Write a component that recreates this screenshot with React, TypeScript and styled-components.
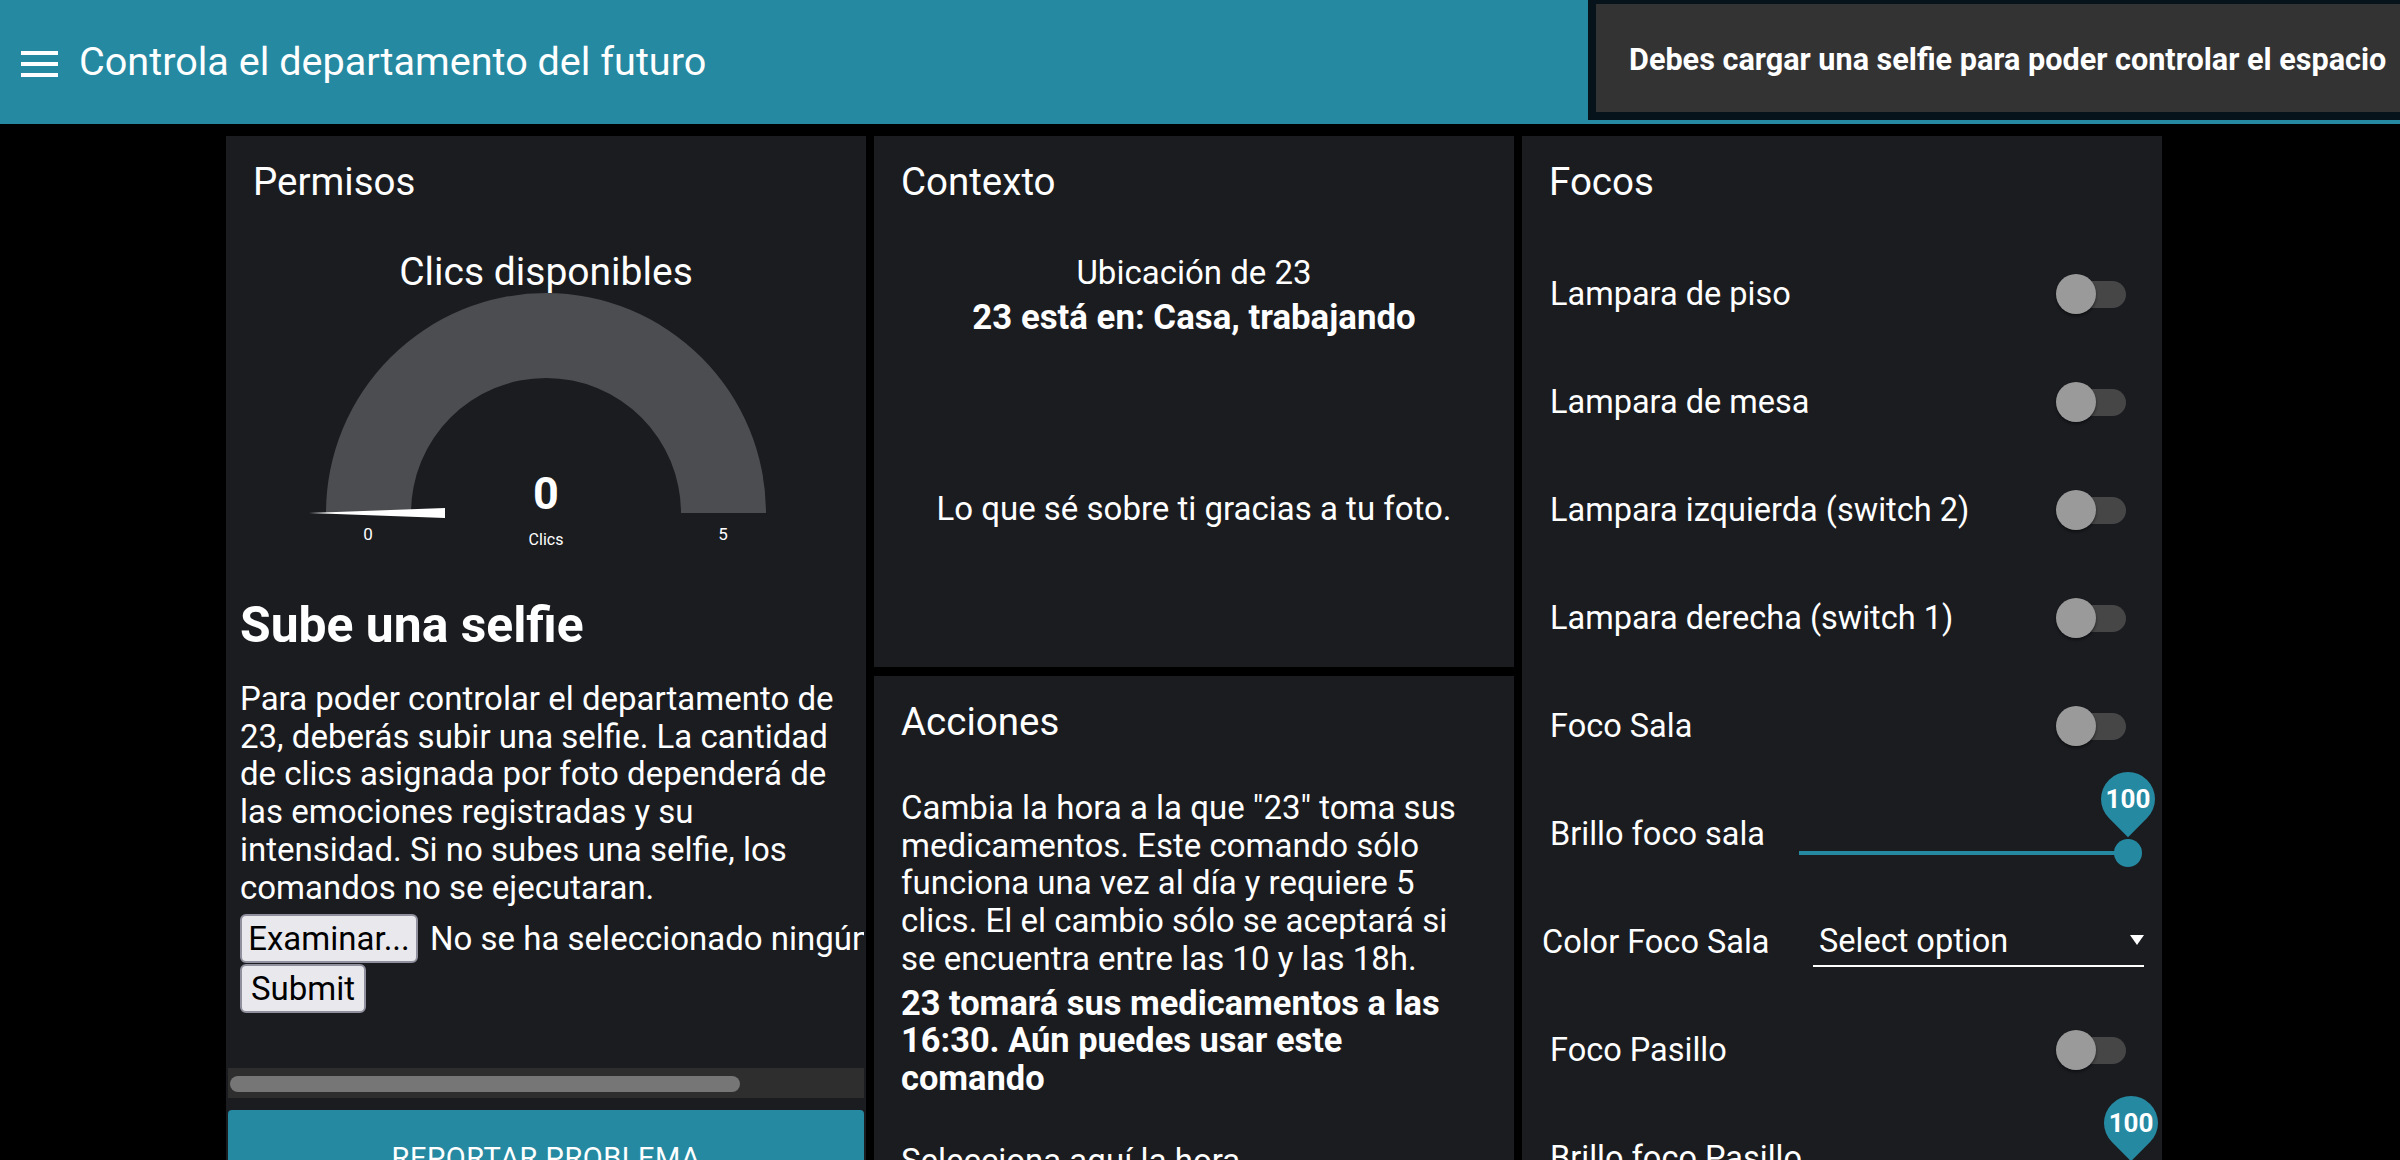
import React from "react";
import styled, { createGlobalStyle } from "styled-components";

const TEAL = "#2589a2";
const CARD = "#1a1c20";

const GlobalStyle = createGlobalStyle`
  html, body { margin: 0; padding: 0; background: #000; }
  body {
    font-family: Roboto, "Helvetica Neue", Arial, sans-serif;
    color: #fff;
    overflow: hidden;
  }
  * { box-sizing: border-box; }
`;

const Page = styled.div`
  width: 2400px;
  height: 1160px;
  overflow: hidden;
  background: #000;
`;

const Header = styled.header`
  position: relative;
  height: 124px;
  background: ${TEAL};
  display: flex;
  align-items: center;
  gap: 21px;
  padding-left: 21px;
`;

const MenuSvg = styled.svg`
  flex: none;
  margin-top: 4px;
`;

const HeaderTitle = styled.h1`
  margin: 0;
  font-size: 39.6px;
  font-weight: 400;
  line-height: 1;
  white-space: nowrap;
`;

const Toast = styled.div`
  position: absolute;
  top: -4px;
  left: 1588px;
  right: -40px;
  height: 124px;
  border: 8px solid #07131a;
  background: #333333;
  display: flex;
  align-items: center;
  padding: 2px 0 0 33px;
  font-size: 30.6px;
  font-weight: 700;
  white-space: nowrap;
`;

const Main = styled.main`
  display: grid;
  grid-template-columns: repeat(3, 640px);
  column-gap: 8px;
  align-items: start;
  padding: 12px 0 0 226px;
`;

const Column = styled.div`
  display: flex;
  flex-direction: column;
  gap: 9px;
`;

const Card = styled.section<{ $h?: number; $minH?: number }>`
  background: ${CARD};
  display: flex;
  flex-direction: column;
  ${(p) => (p.$h ? `height: ${p.$h}px;` : "")}
  ${(p) => (p.$minH ? `min-height: ${p.$minH}px;` : "")}
`;

const CardTitle = styled.h3`
  margin: 0;
  height: 92px;
  display: flex;
  align-items: center;
  padding: 0 27px;
  font-size: 38.5px;
  font-weight: 400;
  line-height: 1;
`;

const GaugeSvg = styled.svg`
  display: block;
  font-family: Roboto, "Helvetica Neue", Arial, sans-serif;
`;

const Template = styled.div`
  margin: 0 2px;
  overflow: hidden;
  padding: 0 12px 55px;
`;

const SelfieHeading = styled.h2`
  margin: 39px 0 0;
  font-size: 49.8px;
  font-weight: 700;
  line-height: 56px;
  white-space: nowrap;
`;

const Paragraph = styled.p<{ $bold?: boolean; $mt?: number }>`
  margin: ${(p) => p.$mt ?? 0}px 0 0;
  font-size: ${(p) => (p.$bold ? 34.4 : 33)}px;
  line-height: 37.7px;
  font-weight: ${(p) => (p.$bold ? 700 : 400)};
`;

const FileRow = styled.div`
  display: flex;
  align-items: center;
  margin-top: 8px;
  white-space: nowrap;
`;

const NativeButton = styled.button<{ $w: number }>`
  flex: none;
  display: block;
  width: ${(p) => p.$w}px;
  height: 49px;
  padding: 0;
  font-family: Roboto, "Helvetica Neue", Arial, sans-serif;
  font-size: 33px;
  color: #000;
  background: #e9e9ed;
  border: 2px solid #8f8f9d;
  border-radius: 6px;
`;

const FileName = styled.span`
  margin-left: 12px;
  font-size: 33px;
`;

const SubmitWrap = styled.div`
  margin-top: 1px;
`;

const ScrollTrack = styled.div`
  margin: 0 2px;
  height: 30px;
  background: #2e2e2e;
  padding: 8px 2px 0;
`;

const ScrollThumb = styled.div`
  width: 510px;
  height: 16px;
  border-radius: 8px;
  background: #767676;
`;

const ActionButton = styled.button`
  margin: 12px 2px 0;
  height: 96px;
  border: none;
  border-radius: 4px;
  background: ${TEAL};
  color: #fff;
  font-family: Roboto, "Helvetica Neue", Arial, sans-serif;
  font-size: 29px;
  letter-spacing: 0.5px;
  text-transform: uppercase;
  display: flex;
  align-items: center;
  justify-content: center;
`;

const CenterBlock = styled.div<{ $mt: number }>`
  margin-top: ${(p) => p.$mt}px;
  text-align: center;
  font-size: 33px;
  line-height: 45px;
`;

const StrongLine = styled.strong`
  font-size: 34.8px;
  font-weight: 700;
`;

const CardBody = styled.div`
  padding: 0 43px 0 27px;
`;

const RowList = styled.div`
  margin-top: 12px;
  display: flex;
  flex-direction: column;
`;

const Row = styled.div<{ $pl?: number; $pr?: number }>`
  height: 108px;
  flex: none;
  display: flex;
  align-items: center;
  padding: 0 ${(p) => p.$pr ?? 36}px 0 ${(p) => p.$pl ?? 28}px;
  font-size: 32.5px;
  white-space: nowrap;
`;

const SwitchBox = styled.div`
  position: relative;
  flex: none;
  margin-left: auto;
  width: 70px;
  height: 40px;
`;

const SwitchTrack = styled.div`
  position: absolute;
  left: 2px;
  right: 0;
  top: 6.5px;
  height: 27px;
  border-radius: 13.5px;
  background: #464646;
`;

const SwitchThumb = styled.div`
  position: absolute;
  left: 0;
  top: 0;
  width: 40px;
  height: 40px;
  border-radius: 50%;
  background: #9a9a9a;
  box-shadow: 0 2px 3px rgba(0, 0, 0, 0.45);
`;

const SliderBox = styled.div`
  position: relative;
  flex: none;
  margin-left: auto;
  margin-top: 38px;
  width: 343px;
  height: 28px;
`;

const SliderTrack = styled.div`
  position: absolute;
  left: 0;
  width: 329px;
  top: 12px;
  height: 4px;
  background: ${TEAL};
`;

const SliderThumb = styled.div`
  position: absolute;
  left: 315px;
  top: 0;
  width: 28px;
  height: 28px;
  border-radius: 50%;
  background: ${TEAL};
`;

const PinShape = styled.div`
  position: absolute;
  left: 302px;
  top: -67px;
  width: 54px;
  height: 54px;
  border-radius: 50% 50% 0 50%;
  background: ${TEAL};
  transform: rotate(45deg);
`;

const PinLabel = styled.div`
  position: absolute;
  left: 302px;
  top: -67px;
  width: 54px;
  height: 54px;
  display: flex;
  align-items: center;
  justify-content: center;
  font-size: 26px;
  font-weight: 700;
`;

const SelectBox = styled.div`
  flex: none;
  margin-left: auto;
  width: 331px;
  height: 50px;
  border-bottom: 2px solid #fff;
  display: flex;
  align-items: center;
  justify-content: space-between;
  padding-left: 6px;
  font-size: 32.5px;
`;

const Caret = styled.span`
  width: 0;
  height: 0;
  margin-bottom: 2px;
  border-left: 7.5px solid transparent;
  border-right: 7.5px solid transparent;
  border-top: 10px solid #fff;
`;

function MenuIcon() {
  return (
    <MenuSvg width="37" height="26" viewBox="0 0 37 26">
      <rect x="0" y="0" width="37" height="4" fill="#fff" />
      <rect x="0" y="11" width="37" height="4" fill="#fff" />
      <rect x="0" y="22" width="37" height="4" fill="#fff" />
    </MenuSvg>
  );
}

function Gauge() {
  return (
    <GaugeSvg width="640" height="330" viewBox="0 0 640 330">
      <text x="320" y="57" fill="#fff" fontSize="39" textAnchor="middle">
        Clics disponibles
      </text>
      <path
        d="M100 285 A220 220 0 0 1 540 285 L455 285 A135 135 0 0 0 185 285 Z"
        fill="#4c4d50"
      />
      <polygon points="83,285 219,280 219,290" fill="#fff" />
      <text x="320" y="281" fill="#fff" fontSize="45" fontWeight="700" textAnchor="middle">
        0
      </text>
      <text x="320" y="317" fill="#fff" fontSize="16" textAnchor="middle">
        Clics
      </text>
      <text x="142" y="312" fill="#fff" fontSize="17" textAnchor="middle">
        0
      </text>
      <text x="497" y="312" fill="#fff" fontSize="17" textAnchor="middle">
        5
      </text>
    </GaugeSvg>
  );
}

function Switch() {
  return (
    <SwitchBox>
      <SwitchTrack />
      <SwitchThumb />
    </SwitchBox>
  );
}

function Slider({ value }: { value: number }) {
  return (
    <SliderBox>
      <SliderTrack />
      <SliderThumb />
      <PinShape />
      <PinLabel>{value}</PinLabel>
    </SliderBox>
  );
}

type FocoRow =
  | { kind: "switch"; label: string }
  | { kind: "slider"; label: string; value: number }
  | { kind: "select"; label: string };

const focos: FocoRow[] = [
  { kind: "switch", label: "Lampara de piso" },
  { kind: "switch", label: "Lampara de mesa" },
  { kind: "switch", label: "Lampara izquierda (switch 2)" },
  { kind: "switch", label: "Lampara derecha (switch 1)" },
  { kind: "switch", label: "Foco Sala" },
  { kind: "slider", label: "Brillo foco sala", value: 100 },
  { kind: "select", label: "Color Foco Sala" },
  { kind: "switch", label: "Foco Pasillo" },
  { kind: "slider", label: "Brillo foco Pasillo", value: 100 },
];

export default function App() {
  return (
    <>
      <GlobalStyle />
      <Page>
        <Header>
          <MenuIcon />
          <HeaderTitle>Controla el departamento del futuro</HeaderTitle>
          <Toast>Debes cargar una selfie para poder controlar el espacio</Toast>
        </Header>
        <Main>
          <Card>
            <CardTitle>Permisos</CardTitle>
            <Gauge />
            <Template>
              <SelfieHeading>Sube una selfie</SelfieHeading>
              <Paragraph $mt={27}>
                Para poder controlar el departamento de 23, deberás subir una selfie. La
                cantidad de clics asignada por foto dependerá de las emociones registradas y
                su intensidad. Si no subes una selfie, los comandos no se ejecutaran.
              </Paragraph>
              <FileRow>
                <NativeButton $w={178}>Examinar...</NativeButton>
                <FileName>No se ha seleccionado ningún archivo.</FileName>
              </FileRow>
              <SubmitWrap>
                <NativeButton $w={126}>Submit</NativeButton>
              </SubmitWrap>
            </Template>
            <ScrollTrack>
              <ScrollThumb />
            </ScrollTrack>
            <ActionButton>Reportar problema</ActionButton>
          </Card>

          <Column>
            <Card $h={531}>
              <CardTitle>Contexto</CardTitle>
              <CenterBlock $mt={22}>
                Ubicación de 23
                <br />
                <StrongLine>23 está en: Casa, trabajando</StrongLine>
              </CenterBlock>
              <CenterBlock $mt={146}>Lo que sé sobre ti gracias a tu foto.</CenterBlock>
            </Card>
            <Card $minH={600}>
              <CardTitle>Acciones</CardTitle>
              <CardBody>
                <Paragraph $mt={21}>
                  Cambia la hora a la que "23" toma sus medicamentos. Este comando sólo
                  funciona una vez al día y requiere 5 clics. El el cambio sólo se aceptará si
                  se encuentra entre las 10 y las 18h.
                </Paragraph>
                <Paragraph $bold $mt={7}>
                  23 tomará sus medicamentos a las 16:30. Aún puedes usar este comando
                </Paragraph>
                <Paragraph $mt={44}>Selecciona aquí la hora</Paragraph>
              </CardBody>
            </Card>
          </Column>

          <Card>
            <CardTitle>Focos</CardTitle>
            <RowList>
              {focos.map((f) => {
                if (f.kind === "switch") {
                  return (
                    <Row key={f.label}>
                      {f.label}
                      <Switch />
                    </Row>
                  );
                }
                if (f.kind === "slider") {
                  return (
                    <Row key={f.label} $pr={20}>
                      {f.label}
                      <Slider value={f.value} />
                    </Row>
                  );
                }
                return (
                  <Row key={f.label} $pl={20} $pr={18}>
                    {f.label}
                    <SelectBox>
                      Select option
                      <Caret />
                    </SelectBox>
                  </Row>
                );
              })}
            </RowList>
          </Card>
        </Main>
      </Page>
    </>
  );
}
